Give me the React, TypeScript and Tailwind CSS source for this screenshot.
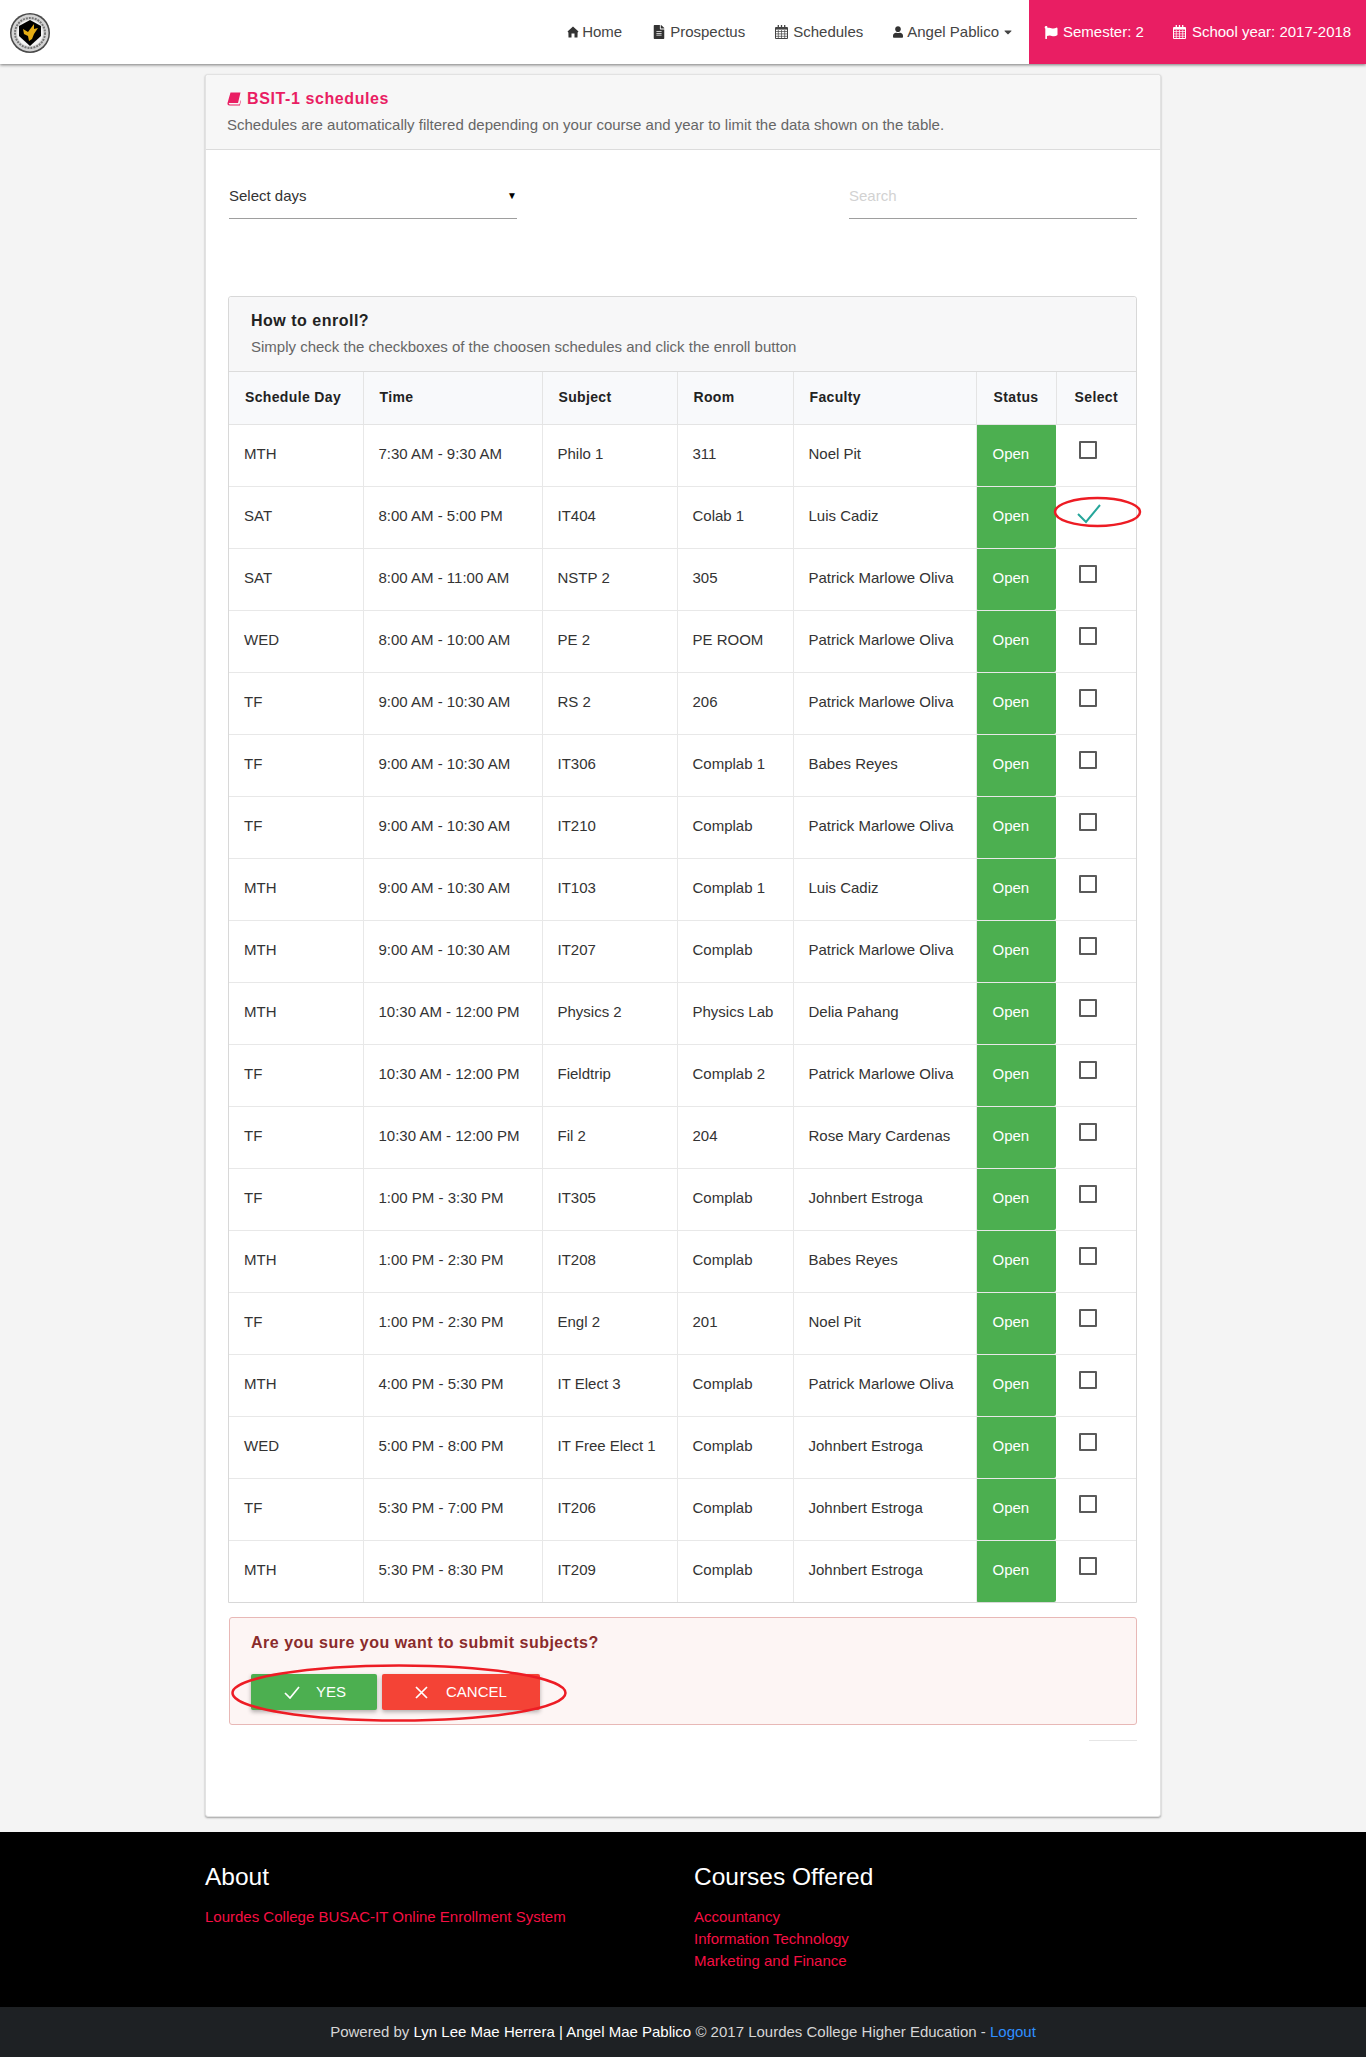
import React from "react";
import { FaFileAlt, FaUser, FaFlag, FaCaretDown } from "react-icons/fa";

const rows: string[][] = [
  ["MTH", "7:30 AM - 9:30 AM", "Philo 1", "311", "Noel Pit"],
  ["SAT", "8:00 AM - 5:00 PM", "IT404", "Colab 1", "Luis Cadiz"],
  ["SAT", "8:00 AM - 11:00 AM", "NSTP 2", "305", "Patrick Marlowe Oliva"],
  ["WED", "8:00 AM - 10:00 AM", "PE 2", "PE ROOM", "Patrick Marlowe Oliva"],
  ["TF", "9:00 AM - 10:30 AM", "RS 2", "206", "Patrick Marlowe Oliva"],
  ["TF", "9:00 AM - 10:30 AM", "IT306", "Complab 1", "Babes Reyes"],
  ["TF", "9:00 AM - 10:30 AM", "IT210", "Complab", "Patrick Marlowe Oliva"],
  ["MTH", "9:00 AM - 10:30 AM", "IT103", "Complab 1", "Luis Cadiz"],
  ["MTH", "9:00 AM - 10:30 AM", "IT207", "Complab", "Patrick Marlowe Oliva"],
  ["MTH", "10:30 AM - 12:00 PM", "Physics 2", "Physics Lab", "Delia Pahang"],
  ["TF", "10:30 AM - 12:00 PM", "Fieldtrip", "Complab 2", "Patrick Marlowe Oliva"],
  ["TF", "10:30 AM - 12:00 PM", "Fil 2", "204", "Rose Mary Cardenas"],
  ["TF", "1:00 PM - 3:30 PM", "IT305", "Complab", "Johnbert Estroga"],
  ["MTH", "1:00 PM - 2:30 PM", "IT208", "Complab", "Babes Reyes"],
  ["TF", "1:00 PM - 2:30 PM", "Engl 2", "201", "Noel Pit"],
  ["MTH", "4:00 PM - 5:30 PM", "IT Elect 3", "Complab", "Patrick Marlowe Oliva"],
  ["WED", "5:00 PM - 8:00 PM", "IT Free Elect 1", "Complab", "Johnbert Estroga"],
  ["TF", "5:30 PM - 7:00 PM", "IT206", "Complab", "Johnbert Estroga"],
  ["MTH", "5:30 PM - 8:30 PM", "IT209", "Complab", "Johnbert Estroga"],
];

const headers = ["Schedule Day", "Time", "Subject", "Room", "Faculty"];

function Logo() {
  return (
    <svg width="42" height="42" viewBox="0 0 42 42" aria-hidden="true">
      <circle cx="21" cy="21" r="20" fill="#4a4a4a" />
      <circle cx="21" cy="21" r="18.5" fill="#d4d4d4" />
      <circle cx="21" cy="21" r="15" fill="none" stroke="#777" strokeWidth="2" strokeDasharray="2 1" />
      <circle cx="21" cy="21" r="13" fill="#f4f4f4" />
      <path d="M21 8 L32 14 L32 24 L21 34 L10 24 L10 14 Z" fill="#000" />
      <path d="M14 17 L19 20 L25 12 L25 17 L29 16 L25 22 L23 27 L20 29 L19 24 L15 22 Z" fill="#e6ad14" />
    </svg>
  );
}

function HomeIcon({ className }: { className: string }) {
  return (
    <svg className={className} viewBox="0 0 12 12" fill="currentColor" aria-hidden="true">
      <path d="M6 .5 L11.5 5.5 L10.6 6.4 L10.5 11.5 L7.5 11.5 L7.5 7.5 L4.5 7.5 L4.5 11.5 L1.5 11.5 L1.4 6.4 L.5 5.5 Z" />
    </svg>
  );
}

function CalIcon({ className }: { className: string }) {
  return (
    <svg className={className} viewBox="0 0 13 14" fill="none" stroke="currentColor" aria-hidden="true">
      <path d="M.5 2.5 H12.5 V13.5 H.5 Z" strokeWidth="1" />
      <path d="M.5 3.8 H12.5" strokeWidth="1.6" />
      <path d="M.5 6.5 H12.5 M.5 8.9 H12.5 M.5 11.3 H12.5 M3.3 5 V13.5 M6.5 5 V13.5 M9.7 5 V13.5" strokeWidth=".7" />
      <path d="M3.3 0 V3 M6.5 0 V3 M9.7 0 V3" strokeWidth="1.3" />
    </svg>
  );
}

function BookIcon({ className }: { className: string }) {
  return (
    <svg className={className} viewBox="0 0 14 14" fill="currentColor" aria-hidden="true">
      <path d="M3.5 .5 H13.5 L11 11 H2.8 C2 11 1.6 11.6 1.9 12.1 C2.1 12.4 2.5 12.5 3 12.5 H12.5 L13.5 8.5 L14 8.5 L12.9 13.5 H2.5 C1 13.5 .2 12.4 .5 11 Z" />
    </svg>
  );
}

function NavItem({ icon, text, className }: { icon: React.ReactNode; text: string; className: string }) {
  return (
    <span className={`flex items-center ${className}`}>
      {icon}
      <span>{text}</span>
    </span>
  );
}

export default function App() {
  return (
    <div className="bg-[#f4f4f4] text-[15px] text-[#333] font-['Liberation_Sans',Arial,sans-serif] w-[1366px] overflow-x-hidden">
      <nav className="relative z-10 h-16 bg-white flex justify-between shadow-[0_1px_3px_rgba(0,0,0,0.5)]">
        <div className="pl-[9px] pt-3">
          <Logo />
        </div>
        <div className="flex h-16">
          <div className="flex items-center text-[#444]">
            <NavItem icon={<HomeIcon className="w-3 h-3 mr-[3px] text-[#333]" />} text="Home" className="mr-[31px]" />
            <NavItem icon={<FaFileAlt className="w-3 h-[14px] mr-[5px] text-[#333]" />} text="Prospectus" className="mr-[30px]" />
            <NavItem icon={<CalIcon className="w-[13px] h-[14px] mr-[5px] text-[#444]" />} text="Schedules" className="mr-[30px]" />
            <NavItem icon={<FaUser className="w-[10px] h-3 mr-[4px] text-[#333]" />} text="Angel Pablico" className="" />
            <FaCaretDown className="w-[10px] h-3 ml-[4px] mr-[16px] text-[#444]" />
          </div>
          <div className="w-[337px] bg-[#e91e63] text-white flex items-center pl-[15px]">
            <NavItem icon={<FaFlag className="w-[14px] h-[13px] mr-[5px]" />} text="Semester: 2" className="mr-[29px]" />
            <NavItem icon={<CalIcon className="w-[13px] h-[14px] mr-[6px]" />} text="School year: 2017-2018" className="" />
          </div>
        </div>
      </nav>

      <main className="pt-[10px] pb-[15px]">
        <section className="ml-[205px] w-[956px] h-[1743px] bg-white rounded-[3px] border border-[#e2e2e2] shadow-[0_1px_2px_rgba(0,0,0,0.35)]">
          <header className="h-[75px] bg-[#f7f7f7] border-b border-[#dcdcdc] pl-[21px] pt-[14px] rounded-t-[3px]">
            <h1 className="flex items-center font-bold text-[16px] leading-5 tracking-[0.6px] text-[#e91e63]">
              <BookIcon className="w-[14px] h-[14px] mr-[6px]" />
              BSIT-1 schedules
            </h1>
            <p className="mt-[6px] leading-5 text-[#666]">Schedules are automatically filtered depending on your course and year to limit the data shown on the table.</p>
          </header>

          <div className="pl-[22px] pr-[23px]">
            <div className="flex justify-between pt-[34px]">
              <div className="relative w-[288px] h-[35px] ml-[1px] border-b border-[#9e9e9e] leading-6 text-[#333]">
                Select days
                <span className="absolute right-0 top-0 text-[10px] text-black">▼</span>
              </div>
              <div className="w-[288px] h-[35px] border-b border-[#9e9e9e] leading-6 text-[#d2d2d2]">Search</div>
            </div>

            <div className="mt-[77px] border border-[#d8d8d8] rounded-t-[3px]">
              <div className="h-[75px] bg-[#f7f7f8] border-b border-[#dcdcdc] pl-[22px] pt-[14px] rounded-t-[3px]">
                <h2 className="font-bold text-[16px] leading-5 tracking-[0.5px] text-[#222]">How to enroll?</h2>
                <p className="mt-[6px] leading-5 text-[#666]">Simply check the checkboxes of the choosen schedules and click the enroll button</p>
              </div>
              <table className="w-[907px] table-fixed border-collapse">
                <colgroup>
                  <col className="w-[134px]" />
                  <col className="w-[179px]" />
                  <col className="w-[135px]" />
                  <col className="w-[116px]" />
                  <col className="w-[183px]" />
                  <col className="w-[80px]" />
                  <col className="w-[80px]" />
                </colgroup>
                <thead>
                  <tr className="h-[52px] bg-[#f8f9fb] border-b border-[#e4e4e4] text-[14px]">
                    {headers.map((h) => (
                      <th key={h} className="border-r border-[#e4e4e4] pl-4 text-left font-bold tracking-[0.35px] text-[#222]">{h}</th>
                    ))}
                    <th className="border-r border-[#e4e4e4] text-center font-bold tracking-[0.35px] text-[#222]">Status</th>
                    <th className="text-center font-bold tracking-[0.35px] text-[#222]">Select</th>
                  </tr>
                </thead>
                <tbody>
                  {rows.map((r, i) => (
                    <tr key={i} className="h-[62px] border-b border-[#e8e8e8] last:border-b-0">
                      {r.map((c, j) => (
                        <td key={j} className="border-r border-[#e8e8e8] pl-[15px] pb-[2px] text-[#333] whitespace-nowrap">{c}</td>
                      ))}
                      <td className="bg-[#4caf50] pl-4 pb-[2px] text-white rounded-[2px]">Open</td>
                      <td className="relative align-top">
                        {i === 1 ? (
                          <>
                            <svg className="absolute left-[21px] top-[17px]" width="24" height="20" viewBox="0 0 24 20" aria-hidden="true">
                              <path d="M1 10 L9 18 L23 1" fill="none" stroke="#26a69a" strokeWidth="2" />
                            </svg>
                            <svg className="absolute left-[-3px] top-[9px]" width="90" height="32" viewBox="0 0 90 32" aria-hidden="true">
                              <ellipse cx="44.5" cy="16" rx="42.5" ry="14" fill="none" stroke="#ed1c24" strokeWidth="2.5" />
                            </svg>
                          </>
                        ) : (
                          <div className="ml-[23px] mt-[16px] w-[18px] h-[18px] border-2 border-[#5a5a5a] rounded-[1px]" />
                        )}
                      </td>
                    </tr>
                  ))}
                </tbody>
              </table>
            </div>

            <div className="relative mt-[14px] ml-[1px] h-[108px] bg-[#fdf5f4] border border-[#e8b8b6] rounded-[3px] pl-[21px] pt-[13px]">
              <p className="font-bold text-[16px] text-[#8a2b2b] leading-6 tracking-[0.5px]">Are you sure you want to submit subjects?</p>
              <div className="flex gap-[5px] mt-[19px] text-white">
                <div className="w-[126px] h-9 bg-[#4caf50] rounded-[2px] flex items-center pl-[33px] shadow-[0_2px_4px_rgba(0,0,0,0.3)]">
                  <svg className="mr-[16px]" width="16" height="13" viewBox="0 0 16 13" aria-hidden="true">
                    <path d="M1 7 L6 12 L15 1" fill="none" stroke="#fff" strokeWidth="1.7" />
                  </svg>
                  YES
                </div>
                <div className="w-[158px] h-9 bg-[#f44336] rounded-[2px] flex items-center pl-[33px] shadow-[0_2px_4px_rgba(0,0,0,0.3)]">
                  <svg className="mr-[18px]" width="13" height="13" viewBox="0 0 13 13" aria-hidden="true">
                    <path d="M1 1 L12 12 M12 1 L1 12" fill="none" stroke="#fff" strokeWidth="1.7" />
                  </svg>
                  CANCEL
                </div>
              </div>
              <svg className="absolute left-0 top-[46px]" width="338" height="58" viewBox="0 0 338 58" aria-hidden="true">
                <ellipse cx="169" cy="29" rx="166.5" ry="27.5" fill="none" stroke="#ed1c24" strokeWidth="2.5" />
              </svg>
            </div>

            <div className="mt-[15px] ml-auto w-[48px] border-t border-[#e6e6e6]" />
          </div>
        </section>
      </main>

      <footer className="bg-black">
        <div className="h-[175px] flex pl-[205px] pt-[29px]">
          <div className="w-[489px]">
            <h3 className="text-[24.5px] leading-8 text-white">About</h3>
            <p className="mt-[13px] leading-[22px] text-[#f50f43]">Lourdes College BUSAC-IT Online Enrollment System</p>
          </div>
          <div>
            <h3 className="text-[24.5px] leading-8 text-white">Courses Offered</h3>
            <ul className="mt-[13px] leading-[22px] text-[#f50f43]">
              <li>Accountancy</li>
              <li>Information Technology</li>
              <li>Marketing and Finance</li>
            </ul>
          </div>
        </div>
        <div className="h-[50px] bg-[#1e2124] flex items-center justify-center text-[#d6d6d6]">
          <span>
            Powered by <span className="text-white">Lyn Lee Mae Herrera | Angel Mae Pablico</span> © 2017 Lourdes College Higher Education - <span className="text-[#2f8fff]">Logout</span>
          </span>
        </div>
      </footer>
    </div>
  );
}
